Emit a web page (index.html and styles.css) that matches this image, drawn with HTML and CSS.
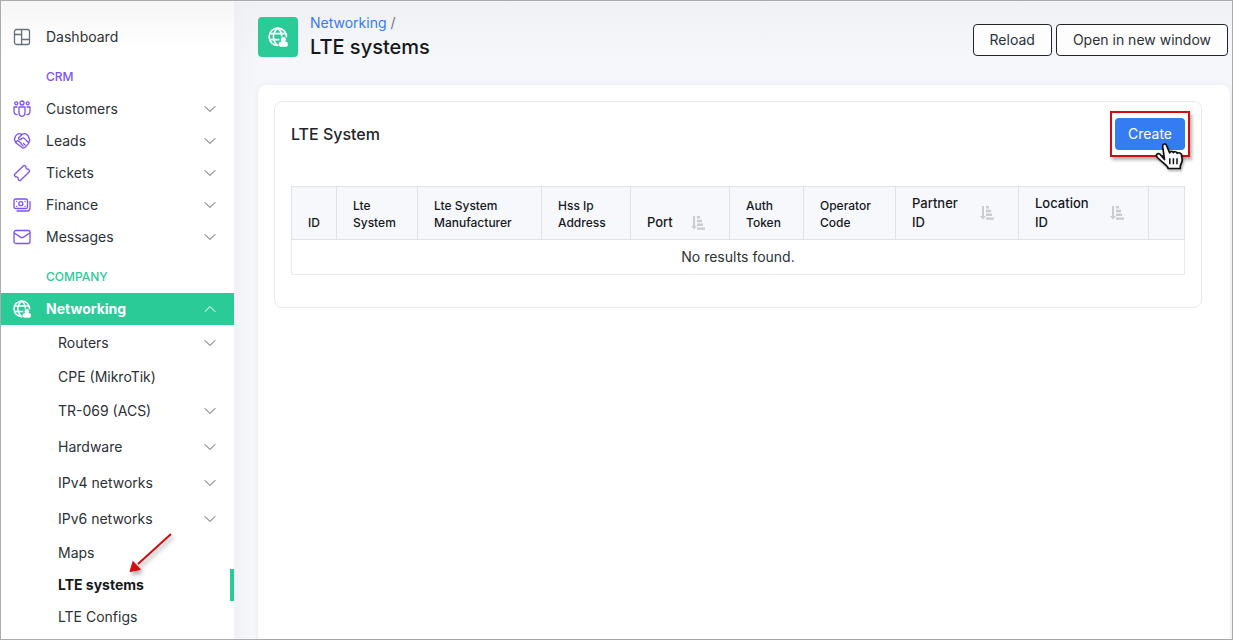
FILE: index.html
```html
<!DOCTYPE html>
<html lang="en">
<head>
<meta charset="utf-8">
<title>LTE systems</title>
<link rel="stylesheet" href="styles.css">
</head>
<body>
<svg class="defs" aria-hidden="true">
  <symbol id="chevron" viewBox="0 0 12 8"><path d="M1 1.5l5 5 5-5" fill="none" stroke="currentColor" stroke-width="1" stroke-linecap="round" stroke-linejoin="round"/></symbol>
  <symbol id="globe" viewBox="0 0 18 18">
    <g fill="none" stroke="currentColor" stroke-width="1.5"><path d="M9.500 16.600A7.800 7.800 0 1 1 16.600 9.300"/><path d="M8.600 16.500C3.600 12 3.600 5.500 8.800 1c2.600 2.300 3.600 5 3.500 7.500M1.600 6h14.400M1.300 11.400h9"/></g>
    <circle cx="13.800" cy="11.200" r="2.300" fill="currentColor"/><path d="M9.600 15.500c0-1.800 1-2.500 2.700-2.500h3.300c1.500 0 2.400.7 2.400 2.500s-1 2.300-2.400 2.300h-3.300c-1.500 0-2.700-.5-2.700-2.300z" fill="currentColor"/>
  </symbol>
  <symbol id="sort" viewBox="0 0 14 14"><path d="M2 0h2v10h2l-3 3.500L0 10h2zM6 0h3v2.400H6zM6 3.800h5v2.400H6zM6 7.600h6v2.400H6zM6 11.400h8v2.400H6z" fill="currentColor"/></symbol>
</svg>
<div class="app">
  <nav class="sidebar">
    <a class="item" href="#"><svg class="icon dash" viewBox="0 0 18 18"><rect x="1.500" y="1.500" width="15" height="15" rx="2"/><path d="M8.600 1.500v15M1.500 6.500h7.100M8.600 11.500h7.900"/></svg><span>Dashboard</span></a>
    <h2 class="section crm">CRM</h2>
    <a class="item" href="#"><svg class="icon" viewBox="0 0 18 18"><circle cx="9" cy="3" r="2"/><circle cx="3.300" cy="3.300" r="1.500"/><circle cx="14.700" cy="3.300" r="1.500"/><path d="M6 7h6v5.500c0 5-6 5-6 0zM4 7H1v4c0 2.500 1 3.600 3 3.700M14 7h3v4c0 2.500-1 3.600-3 3.700"/></svg><span>Customers</span><svg class="chev"><use href="#chevron"/></svg></a>
    <a class="item" href="#"><svg class="icon" viewBox="0 0 18 18"><path d="M9 2.500C6.500 1 4 1.700 2.600 4L1.400 7.500l1.400 3.200L9.700 16l2.100-.4 3.600-4 1.400-3.300L15 3.600C13.300 1.500 11 1.200 9 2.500zM9 2.500L5.700 5.700c-.5 2 1.600 2.600 3 .8l2-.6 5 4.800M2.600 10.500l2-2.100 1.700 1.300 1.500 1.200.8 1.500 1.600 1.500M10.500 11.500l1.600 1.600"/></svg><span>Leads</span><svg class="chev"><use href="#chevron"/></svg></a>
    <a class="item" href="#"><svg class="icon" viewBox="0 0 18 18"><path d="M10.500 1.700c.5-.5 1-.5 1.500 0l1 1c-.5 1.700.7 2.700 2 2.200l1.300 1.400c.5.500.5 1 0 1.500l-8.700 8.500c-.5.500-1 .5-1.500 0l-1.100-1.200c.6-1.500-.7-2.700-2.100-2.100l-1.200-1.200c-.5-.5-.5-1 0-1.500z"/></svg><span>Tickets</span><svg class="chev"><use href="#chevron"/></svg></a>
    <a class="item" href="#"><svg class="icon" viewBox="0 0 18 18"><rect x="1" y="3" width="13.500" height="9.500" rx="1.500"/><circle cx="7.800" cy="7.700" r="2"/><path d="M3.500 5.300h.2M12 5.300h.2M3.500 10.300h.2M12 10.300h.2M17 5.500v6.500c0 2-1 3-3 3H4"/></svg><span>Finance</span><svg class="chev"><use href="#chevron"/></svg></a>
    <a class="item" href="#"><svg class="icon" viewBox="0 0 18 18"><rect x="1" y="2.500" width="16" height="13" rx="2"/><path d="M1.200 5l6.300 4.100c1 .6 2 .6 3 0L16.800 5"/></svg><span>Messages</span><svg class="chev"><use href="#chevron"/></svg></a>
    <h2 class="section company">COMPANY</h2>
    <a class="item active" href="#"><svg class="globe"><use href="#globe"/></svg><span>Networking</span><svg class="chev up"><use href="#chevron"/></svg></a>
    <div class="submenu">
      <a class="sub tall" href="#"><span>Routers</span><svg class="chev"><use href="#chevron"/></svg></a>
      <a class="sub" href="#"><span>CPE (MikroTik)</span></a>
      <a class="sub tall" href="#"><span>TR-069 (ACS)</span><svg class="chev"><use href="#chevron"/></svg></a>
      <a class="sub tall" href="#"><span>Hardware</span><svg class="chev"><use href="#chevron"/></svg></a>
      <a class="sub tall" href="#"><span>IPv4 networks</span><svg class="chev"><use href="#chevron"/></svg></a>
      <a class="sub tall" href="#"><span>IPv6 networks</span><svg class="chev"><use href="#chevron"/></svg></a>
      <a class="sub" href="#"><span>Maps</span></a>
      <a class="sub current" href="#"><span>LTE systems</span>
        <svg class="arrow" viewBox="0 0 50 50" aria-hidden="true"><path d="M45 5L12 35" stroke="#d40b0f" stroke-width="2"/><path d="M4 42.500l3-10 7.500 8z" fill="#d40b0f" stroke="#d40b0f"/></svg></a>
      <a class="sub" href="#"><span>LTE Configs</span></a>
    </div>
  </nav>
  <main class="main">
    <header class="header">
      <div class="badge"><svg class="globe"><use href="#globe"/></svg></div>
      <div class="titles">
        <div class="crumb"><a href="#">Networking</a> /</div>
        <h1>LTE systems</h1>
      </div>
      <div class="actions"><button class="btn" type="button">Reload</button><button class="btn" type="button">Open in new window</button></div>
    </header>
    <section class="page">
      <div class="card">
        <div class="card-head">
          <h2>LTE System</h2>
          <div class="create-wrap"><button class="create" type="button">Create</button><div class="highlight"></div>
            <svg class="cursor" viewBox="0 0 30 30" aria-hidden="true"><path d="M9.500 17.500L7.700 4.500C7.400 1.600 10.500 1 11.500 3.500l3.200 7.300c.4-2 3-1.900 3.700-.2.900-1.500 3.300-1.100 3.700.7 1.400-1.200 4.400-.2 4.400 1.700l.7 4.500c.3 2.500-1.400 4-1.900 6.500v2.500H13.300l-1-2C9.700 22 6.500 19.500 2.400 15.500c-2.300-2.500.2-4.800 2.400-3.500z" fill="#fff" stroke="#111" stroke-width="1.700" stroke-linejoin="round"/><path d="M14.800 16.200v6M18.400 16.200v6M22 16.200v6" stroke="#111" stroke-width="1.500"/></svg>
          </div>
        </div>
        <table class="grid">
          <colgroup><col class="c-id"><col class="c-sys"><col class="c-man"><col class="c-hss"><col class="c-port"><col class="c-auth"><col class="c-op"><col class="c-part"><col class="c-loc"><col class="c-act"></colgroup>
          <thead><tr>
            <th>ID</th><th>Lte<br>System</th><th>Lte System<br>Manufacturer</th><th>Hss Ip<br>Address</th>
            <th class="has-sort"><div class="sortable"><span>Port</span><svg class="sort"><use href="#sort"/></svg></div></th>
            <th>Auth<br>Token</th><th>Operator<br>Code</th>
            <th class="has-sort"><div class="sortable"><span>Partner<br>ID</span><svg class="sort"><use href="#sort"/></svg></div></th>
            <th class="has-sort"><div class="sortable"><span>Location<br>ID</span><svg class="sort"><use href="#sort"/></svg></div></th>
            <th></th>
          </tr></thead>
          <tbody><tr><td colspan="10">No results found.</td></tr></tbody>
        </table>
      </div>
    </section>
  </main>
</div>
</body>
</html>
```
FILE: styles.css
```css
* { box-sizing: border-box; }
body { margin: 0; font-family: Inter, "Liberation Sans", sans-serif; font-size: 14px; font-weight: 400; line-height: 20px; color: #2c3136; }
a { color: inherit; text-decoration: none; }
h1, h2 { margin: 0; }
svg { display: block; flex: none; }
.defs { position: absolute; width: 0; height: 0; }
.app { display: flex; min-height: 100vh; border: 1px solid #aaabad; }
.sidebar { flex: none; width: 233px; padding-top: 20px; background: linear-gradient(#f6f6f6, #fff 50px); }
.item { display: flex; align-items: center; height: 32px; padding: 0 18px 0 12px; }
.icon, .item .globe { width: 18px; height: 18px; margin-right: 15px; }
.icon { fill: none; stroke: #7c52f4; stroke-width: 1.3; stroke-linecap: round; stroke-linejoin: round; }
.dash { stroke: #66717c; }
.chev { width: 12px; height: 8px; margin-left: auto; color: #555b61; }
.up { transform: rotate(180deg); color: #fff; }
.section { height: 40px; padding: 14px 0 6px 45px; font-size: 12px; font-weight: 500; line-height: 20px; }
.crm { color: #7c52f4; }
.company { color: #2bcb98; }
.active { background: #2bcb98; color: #fff; font-weight: 700; }
.sub { display: flex; align-items: center; height: 32px; padding: 0 18px 0 57px; }
.tall { height: 36px; }
.current { position: relative; border-right: 4px solid #2bcb98; font-weight: 700; color: #16191c; }
.arrow { position: absolute; left: 125px; top: -40px; width: 50px; height: 50px; filter: drop-shadow(2px 3px 2px rgba(0, 0, 0, .35)); }
.main { flex: 1; min-width: 0; display: flex; flex-direction: column; padding: 12px 2px 0 24px; background: linear-gradient(90deg, rgba(235, 236, 242, .4), transparent 20px), linear-gradient(#f0f1f5, #f6f7fb 60px); }
.header { display: flex; align-items: flex-start; height: 72px; }
.badge { display: flex; align-items: center; justify-content: center; width: 40px; height: 40px; margin: 4px 12px 0 0; border-radius: 4px; background: #2bcb98; color: #fff; }
.badge .globe { width: 20px; height: 20px; }
.crumb { color: #6c757d; }
.crumb a { color: #357bf2; }
h1 { font-size: 20px; font-weight: 500; line-height: 28px; color: #16191c; }
.actions { display: flex; gap: 4px; margin: 11px 2px 0 auto; }
.btn { height: 32px; padding: 0 16px; border: 1px solid #212529; border-radius: 4px; background: #fdfdfe; color: #2c3136; font: inherit; }
.page { flex: 1; padding: 16px 28px 16px 16px; border-radius: 8px 8px 0 0; background: #fff; box-shadow: 0 0 6px rgba(30, 40, 90, .06); }
.card { padding: 16px 16px 32px; border: 1px solid #e9eaec; border-radius: 8px; }
.card-head { display: flex; align-items: center; justify-content: space-between; margin-bottom: 36px; }
.card-head h2 { font-size: 16px; font-weight: 500; line-height: 24px; color: #212529; }
.create-wrap { position: relative; }
.create { display: block; width: 70px; height: 32px; padding: 0; border: 0; border-radius: 4px; background: #357bf2; color: #fff; font: inherit; }
.highlight { position: absolute; inset: -7px -5px; border: 2px solid #d40b0f; box-shadow: 2px 3px 3px rgba(0, 0, 0, .3); }
.cursor { position: absolute; left: 40px; top: 24px; width: 30px; height: 30px; filter: drop-shadow(1px 2px 1px rgba(0, 0, 0, .3)); }
.grid { width: 100%; table-layout: fixed; border-collapse: collapse; }
.grid th { height: 53px; padding: 8px 0 8px 16px; border: 1px solid #e0e2e5; background: #f7f8fc; font-size: 12px; font-weight: 500; line-height: 17px; text-align: left; vertical-align: bottom; color: #16191c; }
.grid .has-sort { padding-top: 7px; padding-bottom: 7px; }
.grid td { height: 35px; padding: 0; border: 1px solid #e8eaed; text-align: center; }
.sortable { display: flex; align-items: center; justify-content: space-between; padding-right: 24px; font-size: 13px; line-height: 19px; }
.sort { width: 14px; height: 14px; color: #cbccd0; }
.c-id { width: 45px; }
.c-sys { width: 81px; }
.c-man { width: 124px; }
.c-hss { width: 89px; }
.c-port { width: 99px; }
.c-auth { width: 74px; }
.c-op { width: 92px; }
.c-part { width: 123px; }
.c-loc { width: 130px; }
.c-act { width: 36px; }
```
